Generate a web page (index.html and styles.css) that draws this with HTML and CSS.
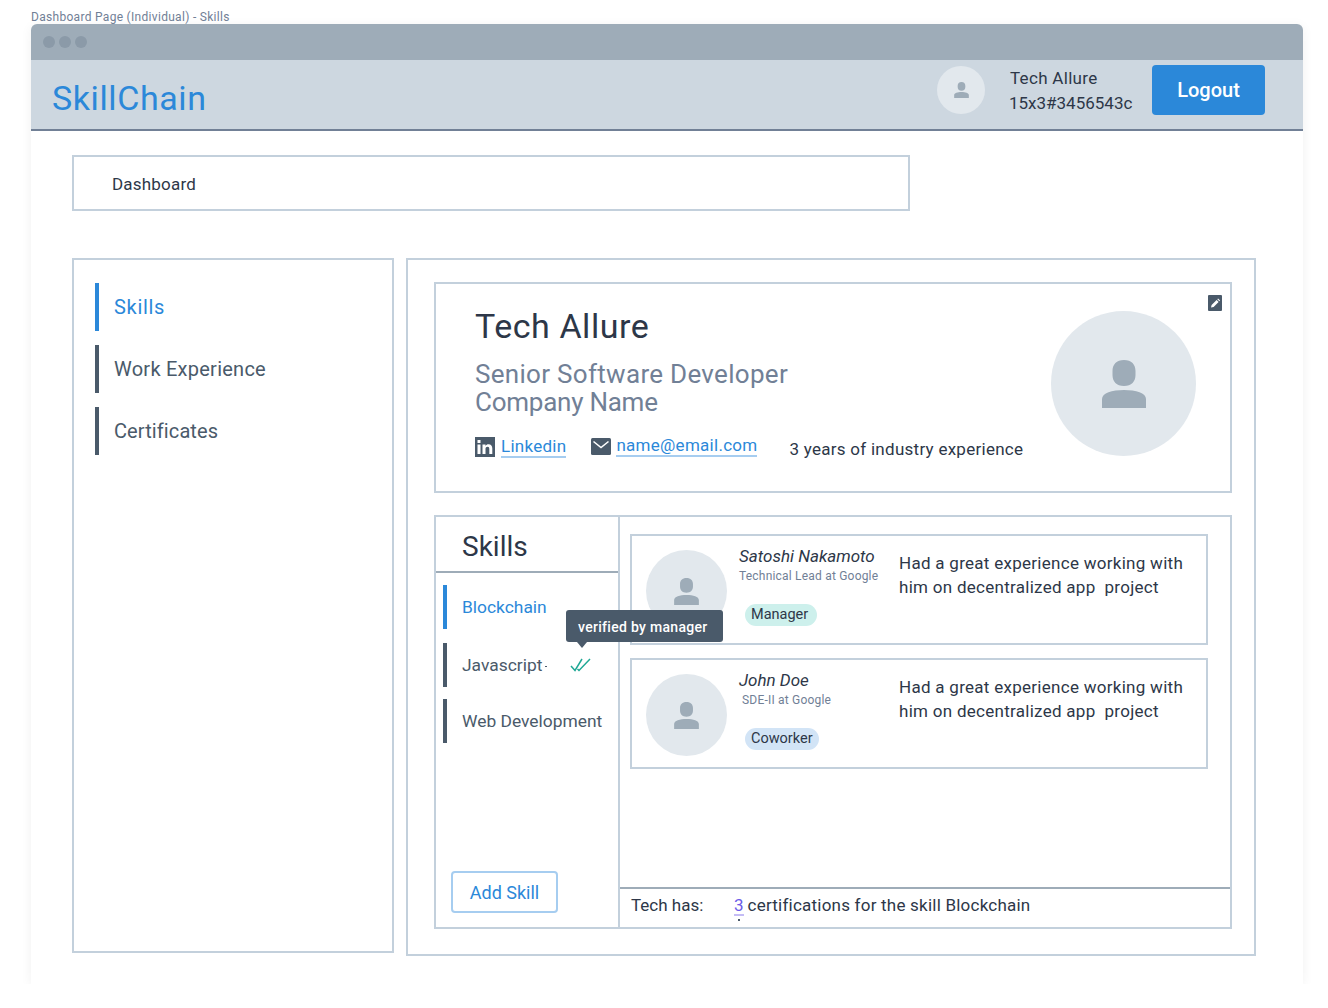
FILE: index.html
```html
<!DOCTYPE html>
<html lang="en">
<head>
  <meta charset="UTF-8">
  <meta name="viewport" content="width=device-width, initial-scale=1.0">
  <title>Dashboard Page (Individual) - Skills</title>
  <link rel="stylesheet" href="styles.css">
</head>
<body>

  <div class="caption">Dashboard Page (Individual) - Skills</div>

  <div class="window">
    <div class="titlebar">
      <span class="dot"></span>
      <span class="dot"></span>
      <span class="dot"></span>
    </div>

    <header class="topbar">
      <div class="logo">SkillChain</div>
      <div class="avatar avatar-top">
        <svg class="person" viewBox="0 0 44 48"><path d="M22 0c7.500 0 11.500 4.500 11.500 11v4c0 6.500-4 11-11.500 11s-11.500-4.500-11.500-11v-4C10.500 4.500 14.500 0 22 0zM0 48v-9c0-6 10-9 22-9s22 3 22 9v9z"/></svg>
      </div>
      <div class="userinfo">
        <div class="username">Tech Allure</div>
        <div class="userid">15x3#3456543c</div>
      </div>
      <button class="logout">Logout</button>
    </header>

    <div class="content">
      <div class="crumb">Dashboard</div>

      <div class="columns">
        <nav class="sidebar">
          <a class="side-item active">Skills</a>
          <a class="side-item">Work Experience</a>
          <a class="side-item side-item-tight">Certificates</a>
        </nav>

        <main class="panel">
          <section class="profile">
            <div class="profile-text">
              <h1 class="name">Tech Allure</h1>
              <div class="role">Senior Software Developer<br><span class="company">Company Name</span></div>
              <div class="links">
                <svg class="icon-in" viewBox="0 0 20 20"><rect width="20" height="20" fill="#4a5a6a"/><rect x="2.500" y="7.500" width="3" height="9.500" fill="#fff"/><rect x="2.500" y="3" width="3" height="3" fill="#fff"/><path d="M7.500 7.500h3v1.400c.6-1 1.700-1.600 3-1.600 2.600 0 3.800 1.600 3.800 4.300V17h-3v-5c0-1.400-.5-2.300-1.700-2.300s-2.100.9-2.100 2.300v5h-3z" fill="#fff"/></svg>
                <a class="link link-in">Linkedin</a>
                <svg class="icon-mail" viewBox="0 0 20 17"><rect width="20" height="17" rx="1.500" fill="#4a5a6a"/><path d="M2.500 3.500 10 9.500l7.500-6" fill="none" stroke="#fff" stroke-width="1.600"/></svg>
                <a class="link link-mail">name@email.com</a>
                <span class="years">3 years of industry experience</span>
              </div>
            </div>
            <div class="avatar avatar-big">
              <svg class="person" viewBox="0 0 44 48"><path d="M22 0c7.500 0 11.500 4.500 11.500 11v4c0 6.500-4 11-11.500 11s-11.500-4.500-11.500-11v-4C10.500 4.500 14.500 0 22 0zM0 48v-9c0-6 10-9 22-9s22 3 22 9v9z"/></svg>
            </div>
            <svg class="edit" viewBox="0 0 14 16"><rect width="14" height="16" rx="1" fill="#4a5a6a"/><path d="M3 12.500l.6-2.600 5-5 2 2-5 5zM9.300 4.200l.8-.8 2 2-.8.8z" fill="#fff"/></svg>
          </section>

          <section class="skills">
            <div class="skills-left">
              <h2 class="skills-title">Skills</h2>
              <div class="skill-list">
                <a class="skill active">Blockchain</a>
                <a class="skill">Javascript<i class="tick-dot"></i>
                  <svg class="ticks" viewBox="0 0 21 14"><path d="M1 8l4 4.500L12 1M7.500 11l1.500 1.500L20 1" fill="none" stroke="#1fa895" stroke-width="1.500"/></svg>
                </a>
                <a class="skill">Web Development</a>
              </div>
              <button class="add-skill">Add Skill</button>
            </div>

            <div class="skills-right">
              <div class="reviews">
                <article class="review">
                  <div class="avatar avatar-mid">
                    <svg class="person" viewBox="0 0 44 48"><path d="M22 0c7.500 0 11.500 4.500 11.500 11v4c0 6.500-4 11-11.500 11s-11.500-4.500-11.500-11v-4C10.500 4.500 14.500 0 22 0zM0 48v-9c0-6 10-9 22-9s22 3 22 9v9z"/></svg>
                  </div>
                  <div class="who">
                    <div class="who-name">Satoshi Nakamoto</div>
                    <div class="who-job">Technical Lead at Google</div>
                    <span class="tag tag-green">Manager</span>
                  </div>
                  <p class="quote">Had a great experience working with him on decentralized app&nbsp; project</p>
                </article>
                <article class="review">
                  <div class="avatar avatar-mid">
                    <svg class="person" viewBox="0 0 44 48"><path d="M22 0c7.500 0 11.500 4.500 11.500 11v4c0 6.500-4 11-11.500 11s-11.500-4.500-11.500-11v-4C10.500 4.500 14.500 0 22 0zM0 48v-9c0-6 10-9 22-9s22 3 22 9v9z"/></svg>
                  </div>
                  <div class="who">
                    <div class="who-name">John Doe</div>
                    <div class="who-job who-job-in">SDE-II at Google</div>
                    <span class="tag tag-blue">Coworker</span>
                  </div>
                  <p class="quote">Had a great experience working with him on decentralized app&nbsp; project</p>
                </article>
              </div>
              <div class="cert-row">
                <span class="cert-label">Tech has:</span>
                <span class="cert-count">3</span>
                <span class="cert-text">certifications for the skill Blockchain</span>
              </div>
            </div>

            <div class="tooltip">verified by manager</div>
          </section>
        </main>
      </div>
    </div>
  </div>

</body>
</html>
```

FILE: styles.css
```css
* {
  box-sizing: border-box;
}

body {
  margin: 0;
  background-color: #fff;
  font-family: Roboto, "Liberation Sans", sans-serif;
  color: #2d3748;
}

.caption {
  height: 24px;
  padding: 10px 0 0 31px;
  font-size: 12px;
  line-height: 14px;
  letter-spacing: 0.3px;
  color: #718096;
}

.window {
  width: 1272px;
  height: 960px;
  margin-left: 31px;
  border-radius: 6px 6px 0 0;
  background-color: #fff;
  box-shadow: 0 2px 12px rgba(0, 0, 0, 0.06);
}

.titlebar {
  display: flex;
  gap: 4px;
  align-items: center;
  height: 36px;
  padding-left: 12px;
  border-radius: 6px 6px 0 0;
  background-color: #9eacb8;
}

.dot {
  width: 12px;
  height: 12px;
  border-radius: 50%;
  background-color: #8b9aa8;
}

.topbar {
  display: flex;
  align-items: center;
  height: 71px;
  padding: 0 38px 14px 21px;
  border-bottom: 2px solid #718096;
  background-color: #cdd7e0;
}

.logo {
  flex: 1;
  padding-top: 21px;
  font-size: 34px;
  line-height: 36px;
  letter-spacing: 0.6px;
  color: #2b88d9;
}

.avatar {
  display: flex;
  flex-shrink: 0;
  align-items: center;
  justify-content: center;
  border-radius: 50%;
  background-color: #e2e8ed;
}

.person {
  fill: #9eacb8;
}

.avatar-top {
  width: 48px;
  height: 48px;
  margin-top: 4px;
}

.avatar-top .person {
  width: 15px;
  height: 16px;
}

.userinfo {
  width: 143px;
  margin: 6px 0 0 24px;
  font-size: 17px;
  line-height: 25px;
  color: #2d3748;
}

.username {
  padding-left: 1px;
  letter-spacing: 0.3px;
}

.logout {
  width: 113px;
  height: 50px;
  margin-top: 4px;
  border: none;
  border-radius: 4px;
  background-color: #2b88d9;
  color: #fff;
  font-family: inherit;
  font-size: 20px;
  font-weight: 500;
}

.content {
  padding: 24px 47px 0 41px;
}

.crumb {
  width: 838px;
  height: 56px;
  padding: 0 38px;
  border: 2px solid #c3d0dc;
  font-size: 17px;
  line-height: 54px;
  letter-spacing: 0.2px;
}

.columns {
  display: flex;
  align-items: flex-start;
  gap: 12px;
  margin-top: 47px;
}

.sidebar {
  display: flex;
  flex-direction: column;
  gap: 14px;
  width: 322px;
  height: 695px;
  padding: 23px 21px;
  border: 2px solid #c3d0dc;
}

.side-item {
  height: 48px;
  padding-left: 15px;
  border-left: 4px solid #4a5a6a;
  font-size: 20px;
  line-height: 48px;
  letter-spacing: 0.25px;
  color: #4a5a6a;
}

.side-item-tight {
  letter-spacing: 0.1px;
}

.side-item.active {
  border-left-color: #2b88d9;
  letter-spacing: 0.7px;
  color: #2b88d9;
}

.panel {
  width: 850px;
  height: 698px;
  padding: 22px 22px 0 26px;
  border: 2px solid #c3d0dc;
}

.profile {
  position: relative;
  display: flex;
  justify-content: space-between;
  height: 211px;
  padding: 27px 34px 0 39px;
  border: 2px solid #c3d0dc;
}

.name {
  margin: 0;
  font-size: 34px;
  font-weight: 400;
  line-height: 30px;
  letter-spacing: 0.55px;
  color: #2d3748;
}

.role {
  margin-top: 19px;
  font-size: 26px;
  line-height: 28px;
  letter-spacing: 0.3px;
  color: #718096;
}

.company {
  letter-spacing: -0.25px;
}

.links {
  display: flex;
  align-items: center;
  height: 26px;
  margin-top: 18px;
  font-size: 17px;
  letter-spacing: 0.27px;
}

.icon-in {
  width: 20px;
  height: 20px;
  margin-right: 6px;
}

.icon-mail {
  width: 20px;
  height: 17px;
  margin: 0 5px 1px 25px;
}

.link {
  border-bottom: 2px solid #a6cdf0;
  line-height: 20px;
  color: #2b88d9;
}

.link-mail {
  margin-bottom: 3px;
}

.years {
  margin: 3px 0 0 32px;
  color: #2d3748;
}

.avatar-big {
  width: 145px;
  height: 145px;
}

.avatar-big .person {
  width: 44px;
  height: 48px;
}

.edit {
  position: absolute;
  top: 11px;
  right: 8px;
  width: 14px;
  height: 16px;
}

.skills {
  position: relative;
  display: flex;
  height: 414px;
  margin-top: 22px;
  border: 2px solid #c3d0dc;
}

.skills-left {
  display: flex;
  flex-direction: column;
  flex-shrink: 0;
  width: 184px;
  border-right: 2px solid #c3d0dc;
}

.skills-title {
  height: 56px;
  margin: 0;
  padding-left: 26px;
  border-bottom: 2px solid #9eacb8;
  font-size: 28px;
  font-weight: 400;
  line-height: 60px;
}

.skill-list {
  display: flex;
  flex-direction: column;
  gap: 14px;
  padding: 12px 0 0 7px;
}

.skill {
  display: flex;
  align-items: center;
  height: 44px;
  padding-left: 15px;
  border-left: 4px solid #4a5a6a;
  font-size: 17.400px;
  color: #4a5a6a;
}

.skill + .skill + .skill {
  margin-top: -2px;
}

.skill.active {
  border-left-color: #2b88d9;
  color: #2b88d9;
}

.tick-dot {
  width: 2px;
  height: 1px;
  margin: 2px 0 0 3px;
  background-color: #4a5a6a;
}

.ticks {
  width: 21px;
  height: 14px;
  margin-left: 23px;
}

.add-skill {
  width: 107px;
  height: 42px;
  margin: auto 0 14px 15px;
  border: 2px solid #a6cdf0;
  border-radius: 4px;
  background-color: #fff;
  color: #2b88d9;
  font-family: inherit;
  font-size: 18px;
}

.skills-right {
  display: flex;
  flex: 1;
  flex-direction: column;
}

.reviews {
  display: flex;
  flex: 1;
  flex-direction: column;
  gap: 13px;
  padding: 17px 0 0 10px;
}

.review {
  display: flex;
  width: 578px;
  height: 111px;
  padding: 14px 0 0 14px;
  border: 2px solid #c3d0dc;
}

.avatar-mid {
  width: 81px;
  height: 82px;
}

.avatar-mid .person {
  width: 25px;
  height: 27px;
}

.who {
  width: 160px;
  margin: -6px 0 0 12px;
}

.who-name {
  height: 25px;
  font-size: 17px;
  font-style: italic;
  line-height: 24px;
}

.who-job {
  font-size: 12px;
  line-height: 15px;
  letter-spacing: 0.2px;
  color: #718096;
}

.who-job-in {
  padding-left: 3px;
}

.tag {
  display: inline-block;
  height: 22px;
  margin: 20px 0 0 6px;
  padding: 0 9px 0 6px;
  border-radius: 11px;
  font-size: 14.500px;
  line-height: 22px;
  color: #2d3748;
}

.tag-green {
  background-color: #cdf0ec;
}

.tag-blue {
  padding-right: 6px;
  background-color: #d2e4f6;
}

.quote {
  width: 300px;
  margin: 1px 0 0 0;
  font-size: 17px;
  line-height: 24px;
  letter-spacing: 0.28px;
  color: #2d3748;
}

.cert-row {
  display: flex;
  height: 40px;
  padding: 5px 0 0 11px;
  border-top: 2px solid #9eacb8;
  font-size: 17px;
  line-height: 22px;
}

.cert-label {
  width: 103px;
}

.cert-count {
  position: relative;
  height: 22px;
  margin-right: 4px;
  border-bottom: 2px solid #c4bcf5;
  color: #6c5ce7;
}

.cert-count::after {
  content: "";
  position: absolute;
  top: 25px;
  left: 4px;
  width: 2px;
  height: 2px;
  background-color: #4a5a6a;
}

.cert-text {
  letter-spacing: 0.22px;
}

.tooltip {
  position: absolute;
  top: 93px;
  left: 130px;
  width: 157px;
  height: 32px;
  padding-left: 12px;
  border-radius: 3px;
  background-color: #4a5a6a;
  color: #fff;
  font-size: 14px;
  font-weight: 500;
  line-height: 34px;
  letter-spacing: 0.3px;
}

.tooltip::after {
  content: "";
  position: absolute;
  top: 32px;
  left: 11px;
  border-top: 6px solid #4a5a6a;
  border-right: 5px solid transparent;
  border-left: 5px solid transparent;
}
```
